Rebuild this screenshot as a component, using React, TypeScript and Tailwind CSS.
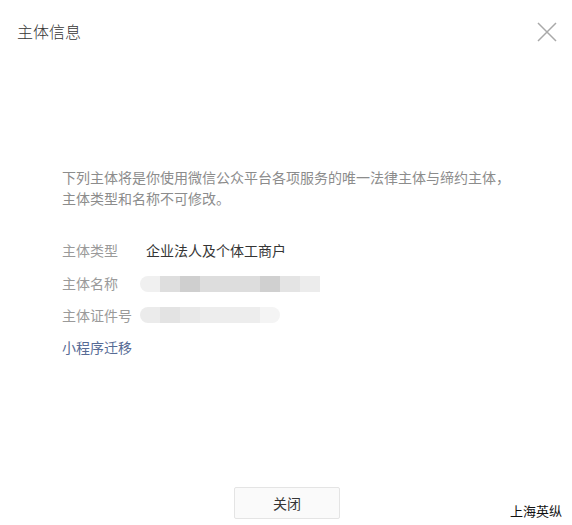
import React from "react";

const font = { fontFamily: '"Noto Sans CJK SC", "Noto Sans", sans-serif' };

export default function App() {
  return (
    <div className="w-[572px] h-[525px] bg-white relative overflow-hidden" style={font}>
      <div className="flex items-center justify-between h-[62px] pl-[17px] pr-[14px]">
        <div className="text-[16px] text-[#353535] leading-none font-light">主体信息</div>
        <svg width="22" height="22" viewBox="0 0 22 22" className="mt-[1px]">
          <path d="M2 2 L20 20 M20 2 L2 20" stroke="#a9a9a9" strokeWidth="1.5" fill="none" />
        </svg>
      </div>
      <div className="pl-[62px] pt-[105px]">
        <p className="text-[14px] leading-[21px] text-[#8c8c8c]">
          下列主体将是你使用微信公众平台各项服务的唯一法律主体与缔约主体，
          <br />
          主体类型和名称不可修改。
        </p>
        <div className="mt-[24px] flex flex-col text-[14px] leading-[20px]">
          <div className="flex items-center h-[33px]">
            <span className="w-[84px] text-[#9a9a9a]">主体类型</span>
            <span className="text-[#353535]">企业法人及个体工商户</span>
          </div>
          <div className="flex items-center h-[33px]">
            <span className="w-[78px] text-[#9a9a9a]">主体名称</span>
            <div className="flex h-[16px] mt-[2px]">
              <div className="w-[20px] bg-[#f0f0f0] rounded-l-full" />
              <div className="w-[20px] bg-[#dedede]" />
              <div className="w-[20px] bg-[#cfcfcf]" />
              <div className="w-[60px] bg-[#dddddd]" />
              <div className="w-[20px] bg-[#d0d0d0]" />
              <div className="w-[20px] bg-[#e4e4e4]" />
              <div className="w-[20px] bg-[#ececec]" />
            </div>
          </div>
          <div className="flex items-center h-[31px]">
            <span className="w-[78px] text-[#9a9a9a]">主体证件号</span>
            <div className="flex h-[16px]">
              <div className="w-[20px] bg-[#ebebeb] rounded-l-full" />
              <div className="w-[20px] bg-[#e3e3e3]" />
              <div className="w-[20px] bg-[#e9e9e9]" />
              <div className="w-[60px] bg-[#ededed]" />
              <div className="w-[20px] bg-[#f4f4f4] rounded-r-full" />
            </div>
          </div>
          <div className="flex items-center h-[33px]">
            <span className="text-[#576b95]">小程序迁移</span>
          </div>
        </div>
      </div>
      <div className="absolute left-[234px] top-[487px] w-[106px] h-[32px] border border-[#e4e4e4] bg-[#fafafa] rounded-[2px] flex items-center justify-center text-[14px] text-[#353535]">
        关闭
      </div>
      <div className="absolute left-[510px] top-[502px] text-[13px] leading-[18px] text-[#111]">上海英纵</div>
    </div>
  );
}
